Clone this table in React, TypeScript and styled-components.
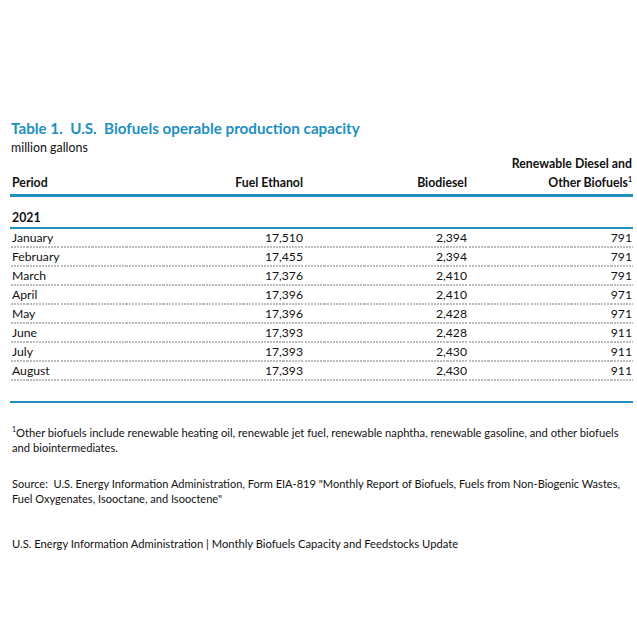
import React from "react";
import styled, { createGlobalStyle } from "styled-components";

const Global = createGlobalStyle`
  html, body { margin: 0; padding: 0; background: #fff; }
  body { font-family: Lato, "Open Sans", sans-serif; color: #111; }
`;

const Page = styled.div`
  width: 637px;
  height: 637px;
  box-sizing: border-box;
  padding: 119px 4px 0 11px;
  display: flex;
  flex-direction: column;
`;

const Title = styled.div`
  font-size: 15.2px;
  font-weight: 700;
  color: #2190c0;
  white-space: pre;
  line-height: 18px;
`;

const Unit = styled.div`
  font-size: 12.4px;
  line-height: 13px;
  padding-top: 4px;
`;

const Table = styled.div`
  margin-left: -1px;
  display: grid;
  grid-template-columns: 1fr 161px 164px 165px;
`;

const HeadCell = styled.div<{ $left?: boolean }>`
  font-size: 12.3px;
  font-weight: 700;
  line-height: 19px;
  padding: 0 ${(p) => (p.$left ? "0" : "1px")} 2px ${(p) => (p.$left ? "2px" : "0")};
  border-bottom: 3px solid #2190c0;
  display: flex;
  flex-direction: column;
  justify-content: flex-end;
  align-items: ${(p) => (p.$left ? "flex-start" : "flex-end")};
`;

const Sup = styled.span`
  font-size: 7px;
  position: relative;
  top: -5px;
  line-height: 1;
`;

const Year = styled.div`
  grid-column: 1 / -1;
  font-size: 12.3px;
  font-weight: 700;
  padding: 11px 0 0 2px;
  line-height: 19px;
  border-bottom: 2px solid #2190c0;
`;

const Cell = styled.div<{ $left?: boolean }>`
  font-size: 12.2px;
  line-height: 17px;
  height: 17px;
  text-align: ${(p) => (p.$left ? "left" : "right")};
  padding: 0 ${(p) => (p.$left ? "0" : "1px")} 0 ${(p) => (p.$left ? "2px" : "0")};
  border-bottom: 2px solid transparent;
  border-image: repeating-linear-gradient(90deg, #bcbcbc 0 2px, transparent 2px 3px) 2;
`;

const EndRule = styled.div`
  grid-column: 1 / -1;
  height: 2px;
  margin-top: 20px;
  background: #2190c0;
`;

const Note = styled.p`
  font-size: 11.2px;
  line-height: 15px;
  margin: 0;
  padding-left: 1px;
  white-space: nowrap;
`;

const Footnote = styled(Note)`
  font-size: 11.2px;
  margin-top: 22px;
`;

const Source = styled(Note)`
  margin-top: 21px;
  font-size: 11.05px;
`;

const Footer = styled(Note)`
  margin-top: 30px;
  font-size: 11.2px;
`;

const rows: [string, string, string, string][] = [
  ["January", "17,510", "2,394", "791"],
  ["February", "17,455", "2,394", "791"],
  ["March", "17,376", "2,410", "791"],
  ["April", "17,396", "2,410", "971"],
  ["May", "17,396", "2,428", "971"],
  ["June", "17,393", "2,428", "911"],
  ["July", "17,393", "2,430", "911"],
  ["August", "17,393", "2,430", "911"],
];

export default function App() {
  return (
    <>
      <Global />
      <Page>
        <Title>{"Table 1.  U.S.  Biofuels operable production capacity"}</Title>
        <Unit>million gallons</Unit>
        <Table>
          <HeadCell $left>Period</HeadCell>
          <HeadCell>Fuel Ethanol</HeadCell>
          <HeadCell>Biodiesel</HeadCell>
          <HeadCell>
            <span>Renewable Diesel and</span>
            <span>
              Other Biofuels<Sup>1</Sup>
            </span>
          </HeadCell>
          <Year>2021</Year>
          {rows.map((r, i) =>
            r.map((v, j) => (
              <Cell key={`${i}-${j}`} $left={j === 0}>
                {v}
              </Cell>
            ))
          )}
          <EndRule />
        </Table>
        <Footnote>
          <Sup>1</Sup>Other biofuels include renewable heating oil, renewable jet fuel, renewable naphtha,
          renewable gasoline, and other biofuels
          <br />
          and biointermediates.
        </Footnote>
        <Source>
          {'Source:\u00a0\u00a0U.S. Energy Information Administration, Form EIA-819 "Monthly Report of Biofuels, Fuels from Non-Biogenic Wastes,'}
          <br />
          {'Fuel Oxygenates, Isooctane, and Isooctene"'}
        </Source>
        <Footer>U.S. Energy Information Administration | Monthly Biofuels Capacity and Feedstocks Update</Footer>
      </Page>
    </>
  );
}
